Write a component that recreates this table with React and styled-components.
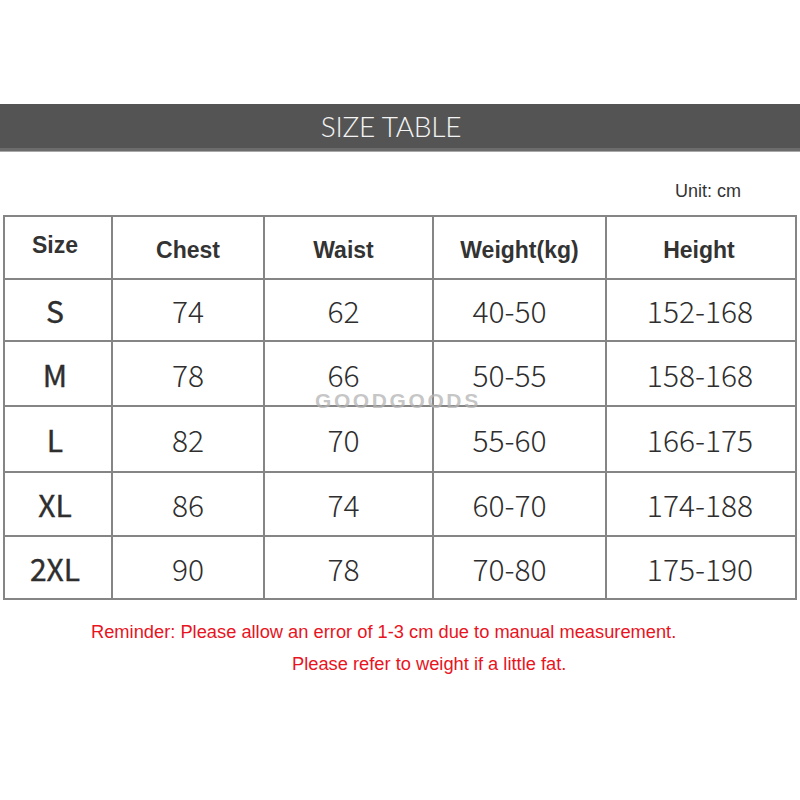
import React from "react";
import styled, { createGlobalStyle } from "styled-components";

const GlobalStyle = createGlobalStyle`
	html, body {
		margin: 0;
		padding: 0;
		background: #ffffff;
	}
	body {
		font-family: "Liberation Sans", Arial, sans-serif;
	}
`;

const Page = styled.div`
	width: 800px;
	height: 800px;
	padding-top: 104px;
	box-sizing: border-box;
	background: #ffffff;
	position: relative;
	overflow: hidden;
`;

const TitleBar = styled.div`
	height: 44px;
	background: #545454;
	border-bottom: 3px solid #6c6c6c;
	box-shadow: 0 1px 0 #a8a8a8;
	display: flex;
	align-items: center;
	justify-content: center;
	padding-right: 18px;
	box-sizing: content-box;
`;

const Title = styled.h1`
	margin: 0;
	font-family: Lato, "Open Sans", sans-serif;
	font-weight: 300;
	font-size: 28px;
	color: #f4f4f4;
	letter-spacing: -0.2px;
`;

const UnitRow = styled.div`
	display: flex;
	justify-content: flex-end;
	padding: 31px 59px 0 0;
	height: 48px;
	box-sizing: border-box;
	font-size: 18px;
	line-height: 18px;
	color: #333;
`;

const TableWrap = styled.div`
	position: relative;
	margin: 16px 0 0 3px;
	width: 792px;
`;

const Table = styled.table`
	border-collapse: collapse;
	width: 792px;
	table-layout: fixed;
	td, th {
		border: 2px solid #858585;
		text-align: center;
		vertical-align: middle;
		padding: 0;
		color: #2e2e2e;
	}
`;

const HeadCell = styled.th`
	font-family: "Liberation Sans", Arial, sans-serif;
	font-weight: 700;
	font-size: 23px;
	padding-top: ${(p) => (p.$up ? "0" : "5px")} !important;
	padding-bottom: ${(p) => (p.$up ? "4px" : "0")} !important;
	padding-right: ${(p) => p.$shift || 0}px !important;
	color: #333 !important;
`;

const SizeCell = styled.td`
	font-family: "Noto Sans CJK SC", "Noto Sans", sans-serif;
	font-weight: 400;
	font-size: 30px;
	padding-right: 6px !important;
	-webkit-text-stroke: 0.4px #2e2e2e;
`;

const NumCell = styled.td`
	font-family: "Noto Sans CJK SC", "Noto Sans", sans-serif;
	font-weight: 300;
	font-size: 30px;
	padding-right: ${(p) => p.$shift || 0}px !important;
`;

const Row = styled.tr`
	height: ${(p) => p.$h}px;
`;

const Watermark = styled.div`
	position: absolute;
	left: 312px;
	top: 174px;
	font-family: "Liberation Sans", Arial, sans-serif;
	font-weight: 700;
	font-size: 21px;
	letter-spacing: 2.6px;
	color: rgba(180, 180, 180, 0.75);
	pointer-events: none;
`;

const Notes = styled.div`
	margin-top: 22px;
	display: flex;
	flex-direction: column;
	gap: 13px;
	font-family: "Liberation Sans", Arial, sans-serif;
	font-size: 18.3px;
	line-height: 19px;
	color: #e8141e;
`;

const Note = styled.div`
	padding-left: ${(p) => p.$indent}px;
	white-space: nowrap;
`;

const cols = [108, 152, 169, 173, 190];
const shifts = [0, 10, 20, 2];

const rows = [
	{ size: "S", h: 62, vals: ["74", "62", "40-50", "152-168"] },
	{ size: "M", h: 65, vals: ["78", "66", "50-55", "158-168"] },
	{ size: "L", h: 66, vals: ["82", "70", "55-60", "166-175"] },
	{ size: "XL", h: 64, vals: ["86", "74", "60-70", "174-188"] },
	{ size: "2XL", h: 63, vals: ["90", "78", "70-80", "175-190"] },
];

export default function App() {
	return (
		<>
			<GlobalStyle />
			<Page>
				<TitleBar>
					<Title>SIZE TABLE</Title>
				</TitleBar>
				<UnitRow>Unit: cm</UnitRow>
				<TableWrap>
					<Table>
						<colgroup>
							{cols.map((w, i) => (
								<col key={i} style={{ width: w }} />
							))}
						</colgroup>
						<thead>
							<Row $h={63}>
								<HeadCell $up $shift={6}>Size</HeadCell>
								<HeadCell>Chest</HeadCell>
								<HeadCell $shift={10}>Waist</HeadCell>
								<HeadCell $shift={0}>Weight(kg)</HeadCell>
								<HeadCell $shift={4}>Height</HeadCell>
							</Row>
						</thead>
						<tbody>
							{rows.map((r) => (
								<Row key={r.size} $h={r.h}>
									<SizeCell>{r.size}</SizeCell>
									{r.vals.map((v, i) => (
										<NumCell key={i} $shift={shifts[i]}>
											{v}
										</NumCell>
									))}
								</Row>
							))}
						</tbody>
					</Table>
					<Watermark>GOODGOODS</Watermark>
				</TableWrap>
				<Notes>
					<Note $indent={91}>
						Reminder: Please allow an error of 1-3 cm due to manual measurement.
					</Note>
					<Note $indent={292}>Please refer to weight if a little fat.</Note>
				</Notes>
			</Page>
		</>
	);
}
